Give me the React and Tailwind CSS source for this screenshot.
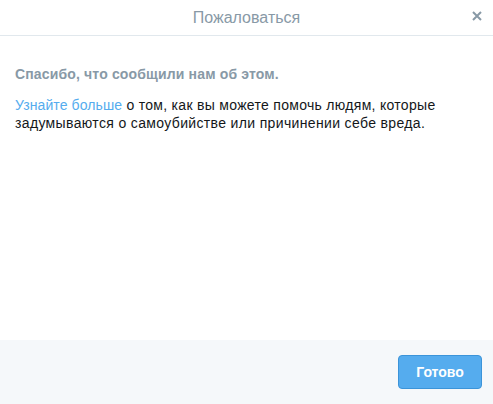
import React from 'react';

// Report dialog: header, message body and footer with a confirm button
export default function App() {
  return (
    <div className="w-[493px] h-[404px] bg-white flex flex-col font-['Liberation_Sans',Arial,sans-serif]">
      {/* Header */}
      <div className="h-[36px] shrink-0 border-b border-[#e1e8ed] relative flex items-center justify-center">
        <span className="text-[16px] text-[#8899a6] leading-none">Пожаловаться</span>
        <button className="absolute right-[8px] top-[8px] w-[16px] h-[16px] flex items-center justify-center text-[#8899a6]">
          <svg width="10" height="10" viewBox="0 0 10 10">
            <path d="M1 1L9 9M9 1L1 9" stroke="currentColor" strokeWidth="2" />
          </svg>
        </button>
      </div>

      {/* Body */}
      <div className="flex-1 px-[15px] pt-[29px]">
        <p className="text-[14px] leading-[18px] font-bold text-[#8899a6] tracking-[0.15px]">
          Спасибо, что сообщили нам об этом.
        </p>
        <p className="mt-[13px] text-[14px] leading-[18px] text-[#14171a]">
          <span className="tracking-[0.3px]">
            <a href="#" className="text-[#55acee] tracking-[0.1px]">Узнайте больше</a> о том, как вы можете помочь людям, которые
          </span>
          <br />
          <span className="tracking-[0.35px]">задумываются о самоубийстве или причинении себе вреда.</span>
        </p>
      </div>

      {/* Footer */}
      <div className="h-[64px] shrink-0 bg-[#f5f8fa] flex items-center justify-end pr-[11px]">
        <button className="w-[84px] h-[34px] rounded-[4px] bg-[#55acee] border border-[#3b94d9] text-white text-[14px] font-bold">
          Готово
        </button>
      </div>
    </div>
  );
}
